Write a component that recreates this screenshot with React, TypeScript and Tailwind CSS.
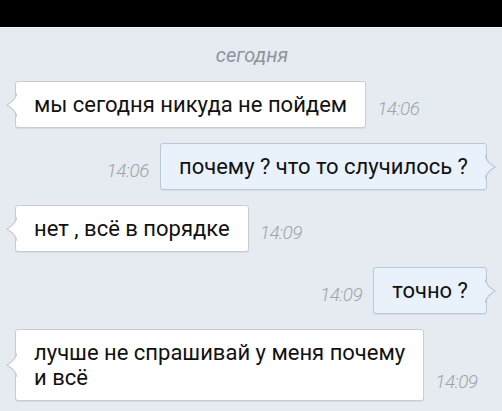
import React from "react";

interface Msg {
  text: string[];
  time: string;
  out: boolean;
}

const messages: Msg[] = [
  { text: ["мы сегодня никуда не пойдем"], time: "14:06", out: false },
  { text: ["почему ? что то случилось ?"], time: "14:06", out: true },
  { text: ["нет , всё в порядке"], time: "14:09", out: false },
  { text: ["точно ?"], time: "14:09", out: true },
  { text: ["лучше не спрашивай у меня почему", "и всё"], time: "14:09", out: false },
];

// little curved tail on the side of a bubble
const Tail = ({ out }: { out: boolean }) => (
  <svg
    width="11"
    height="24"
    viewBox="0 0 11 24"
    className={`absolute top-1/2 -translate-y-1/2 ${out ? "-right-[10px] scale-x-[-1]" : "-left-[10px]"}`}
  >
    <path
      d="M11 0 C10 6 6 9 1 12 C6 15 10 18 11 24 Z"
      fill={out ? "#e9f1fa" : "#ffffff"}
    />
    <path
      d="M11 0 C10 6 6 9 1 12 C6 15 10 18 11 24"
      fill="none"
      stroke={out ? "#b9c9d9" : "#c9cdd3"}
      strokeWidth="1.2"
    />
  </svg>
);

const Time = ({ t }: { t: string }) => (
  <span className="text-[19px] italic font-light text-[#9ea4ac] leading-none mb-[10px] shrink-0 tracking-[-0.5px]">
    {t}
  </span>
);

export default function App() {
  return (
    <div
      className="w-[502px] h-[411px] overflow-hidden bg-[#e6ebf1] flex flex-col"
      style={{ fontFamily: "Roboto, 'Noto Sans', sans-serif" }}
    >
      <div className="h-[27px] bg-black shrink-0" />
      <div className="h-px bg-[#f2f5f8] shrink-0" />
      <div className="text-center text-[20px] italic text-[#8e949b] mt-[15px] leading-6 pl-[2px]">
        сегодня
      </div>
      <div className="flex flex-col gap-[15px] px-[15px] mt-[14px]">
        {messages.map((m, i) => (
          <div
            key={i}
            className={`flex items-end gap-[11px] ${m.out ? "justify-end" : "justify-start"}`}
          >
            {m.out && <Time t={m.time} />}
            <div
              className={`relative rounded-[3px] border px-[18px] py-[10px] text-[22px] leading-[25px] text-[#111] shadow-[0_1px_0_rgba(0,0,0,0.06)] ${
                m.out ? "bg-[#e9f1fa] border-[#b9c9d9]" : "bg-white border-[#c9cdd3]"
              }`}
            >
              <Tail out={m.out} />
              {m.text.map((line, j) => (
                <div key={j} className="whitespace-nowrap">{line}</div>
              ))}
            </div>
            {!m.out && <Time t={m.time} />}
          </div>
        ))}
      </div>
    </div>
  );
}
